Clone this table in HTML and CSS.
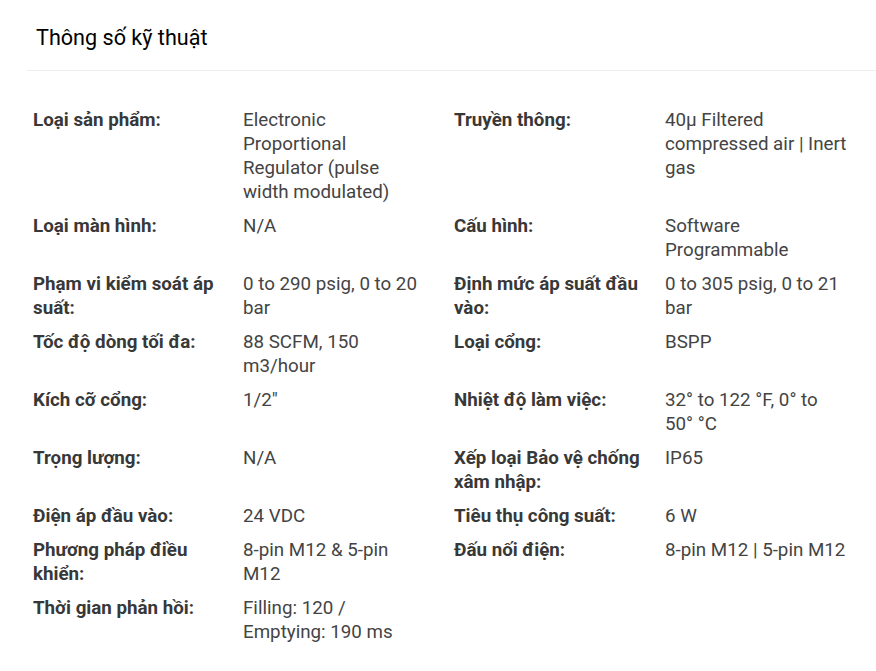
FILE: index.html
```html
<!DOCTYPE html>
<html lang="vi">
<head>
<meta charset="utf-8">
<title>Thông số kỹ thuật</title>
<link rel="stylesheet" href="styles.css">
</head>
<body>
<section class="specs">
  <h2 class="specs-title">Thông số kỹ thuật</h2>
  <div class="specs-grid">
    <div class="label">Loại sản phẩm:</div>
    <div class="value">Electronic Proportional Regulator (pulse width modulated)</div>
    <div class="label">Truyền thông:</div>
    <div class="value">40µ Filtered compressed air | Inert gas</div>

    <div class="label">Loại màn hình:</div>
    <div class="value">N/A</div>
    <div class="label">Cấu hình:</div>
    <div class="value">Software Programmable</div>

    <div class="label">Phạm vi kiểm soát áp suất:</div>
    <div class="value">0 to 290 psig, 0 to 20 bar</div>
    <div class="label">Định mức áp suất đầu vào:</div>
    <div class="value">0 to 305 psig, 0 to 21 bar</div>

    <div class="label">Tốc độ dòng tối đa:</div>
    <div class="value">88 SCFM, 150 m3/hour</div>
    <div class="label">Loại cổng:</div>
    <div class="value">BSPP</div>

    <div class="label">Kích cỡ cổng:</div>
    <div class="value">1/2"</div>
    <div class="label">Nhiệt độ làm việc:</div>
    <div class="value">32° to 122 °F, 0° to 50° °C</div>

    <div class="label">Trọng lượng:</div>
    <div class="value">N/A</div>
    <div class="label">Xếp loại Bảo vệ chống xâm nhập:</div>
    <div class="value">IP65</div>

    <div class="label">Điện áp đầu vào:</div>
    <div class="value">24 VDC</div>
    <div class="label">Tiêu thụ công suất:</div>
    <div class="value">6 W</div>

    <div class="label">Phương pháp điều khiển:</div>
    <div class="value">8-pin M12 &amp; 5-pin M12</div>
    <div class="label">Đấu nối điện:</div>
    <div class="value">8-pin M12 | 5-pin M12</div>

    <div class="label">Thời gian phản hồi:</div>
    <div class="value">Filling: 120 / Emptying: 190 ms</div>
  </div>
</section>
</body>
</html>
```

FILE: styles.css
```css
html, body {
  margin: 0;
  padding: 0;
  background: #ffffff;
}

body {
  font-family: Roboto, "Noto Sans", Arial, sans-serif;
  color: #333333;
}

.specs {
  padding-left: 27px;
}

.specs-title {
  margin: 0;
  padding: 24px 0 18px 9px;
  font-size: 21.6px;
  line-height: 28px;
  font-weight: 400;
  color: #000000;
  border-bottom: 1px solid #eeeeee;
}

.specs-grid {
  display: grid;
  grid-template-columns: 210px 211px 211px 211px;
  row-gap: 10px;
  margin-top: 37px;
  font-size: 18.75px;
  line-height: 24px;
}

.label,
.value {
  padding-left: 6px;
}

.label {
  padding-right: 14px;
  font-weight: 700;
  color: #383838;
}

.value {
  padding-right: 20px;
  font-weight: 400;
  color: #444444;
}
```
